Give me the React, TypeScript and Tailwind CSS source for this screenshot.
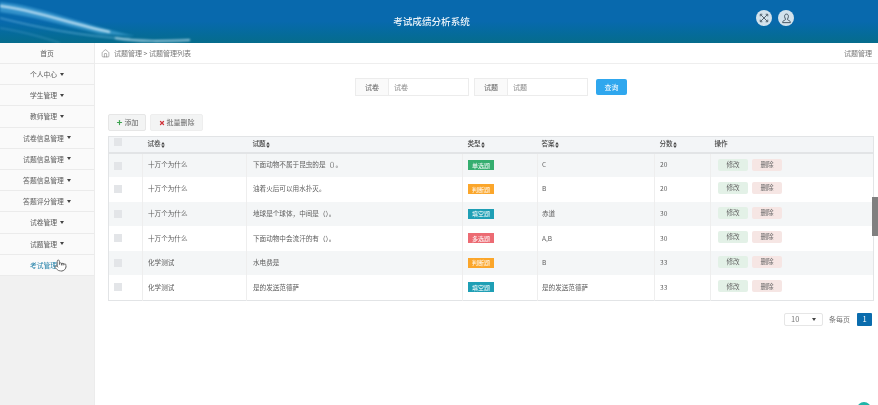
import React from 'react';
import { Home, Plus, X, Pointer } from 'lucide-react';

const menus = ['个人中心', '学生管理', '教师管理', '试卷信息管理', '试题信息管理', '答题信息管理', '答题评分管理', '试卷管理', '试题管理', '考试管理'];

const rows = [
  { paper: '十万个为什么', title: '下面动物不属于昆虫的是（）。', type: '单选题', color: 'bg-[#35ae6f]', answer: 'C', score: 20 },
  { paper: '十万个为什么', title: '油着火后可以用水扑灭。', type: '判断题', color: 'bg-[#fba62b]', answer: 'B', score: 20 },
  { paper: '十万个为什么', title: '地球是个球体，中间是（）。', type: '填空题', color: 'bg-[#1f9fb5]', answer: '赤道', score: 30 },
  { paper: '十万个为什么', title: '下面动物中会流汗的有（）。', type: '多选题', color: 'bg-[#ec6b73]', answer: 'A,B', score: 30 },
  { paper: '化学测试', title: '水电费是', type: '判断题', color: 'bg-[#fba62b]', answer: 'B', score: 33 },
  { paper: '化学测试', title: '是的发送范德萨', type: '填空题', color: 'bg-[#1f9fb5]', answer: '是的发送范德萨', score: 33 },
];

const Sort = () => (
  <svg viewBox="0 0 6 10" className="inline-block h-[6px] w-[4px] fill-[#444]">
    <path d="M3 0 6 4H0ZM3 10 0 6H6Z" />
  </svg>
);

const Caret = () => <span className="ml-[3px] inline-block border-x-[2px] border-t-[3px] border-x-transparent border-t-[#444] align-middle" />;

const Check = () => <div className="ml-[5px] mt-[8px] h-[8px] w-[8px] bg-[#e3e5e8]" />;

export default function App() {
  return (
    <div className="relative flex h-[405px] w-[878px] flex-col overflow-hidden bg-white font-['Noto_Sans_CJK_SC','Liberation_Sans',sans-serif] text-[6.6px] text-[#5c5c5c] blur-[0.3px]">
      <header className="relative flex h-[43px] shrink-0 items-center justify-center overflow-hidden bg-gradient-to-b from-[#0869ad] from-50% to-[#066c8c]">
        <svg viewBox="0 0 300 43" className="absolute left-0 top-0 h-[43px] w-[300px] blur-[0.8px]" fill="none">
          <path d="M0 2C40 6 80 24 135 36L100 34C60 24 30 16 0 12Z" fill="#58b4e4" opacity=".55" />
          <path d="M0 6C35 10 70 24 110 32" stroke="#e6f7ff" strokeWidth="2" opacity=".85" />
          <path d="M0 18C40 28 80 36 130 39" stroke="#8fd0f0" strokeWidth="1" opacity=".7" />
          <path d="M0 28C25 32 45 38 60 43" stroke="#7dbfe4" strokeWidth="1" opacity=".45" />
          <path d="M115 38C140 42 165 41 190 40" stroke="#d8f2fd" strokeWidth="2" opacity=".7" />
        </svg>
        <h1 className="relative ml-[-15px] text-[9.6px] font-medium text-[#e8f2f8]">考试成绩分析系统</h1>
        <div className="absolute left-[756px] top-[10px] flex gap-[6px]">
          <div className="flex h-[16px] w-[16px] items-center justify-center rounded-full bg-[#d3e2ec]">
            <svg viewBox="0 0 12 12" className="h-[10px] w-[10px] fill-none stroke-[#3c4c58]" strokeWidth="1">
              <path d="M2 2 10 10M10 2 2 10M1.5 4V1.5H4M8 1.5H10.5V4M1.5 8V10.5H4M8 10.5H10.5V8" />
            </svg>
          </div>
          <div className="flex h-[16px] w-[16px] items-center justify-center rounded-full bg-[#d3e2ec]">
            <svg viewBox="0 0 12 12" className="h-[11px] w-[11px] fill-none stroke-[#3c4c58]" strokeWidth="1">
              <path d="M6 1.2C4.6 1.2 3.9 2.3 3.9 3.6 3.9 5 4.6 6 4.9 6.6 5 7.4 4.6 7.7 3.5 8.1 2.4 8.5 1.8 9 1.8 10.5H10.2C10.2 9 9.6 8.5 8.5 8.1 7.4 7.7 7 7.4 7.1 6.6 7.4 6 8.1 5 8.1 3.6 8.1 2.3 7.4 1.2 6 1.2Z" />
            </svg>
          </div>
        </div>
      </header>

      <div className="flex min-h-0 flex-1">
        <aside className="w-[95px] shrink-0 border-r border-[#ececec] bg-[#f1f1f1] text-[6.8px]">
          <div className="flex h-[21px] items-center justify-center border-b border-[#ebebeb] bg-[#fafafa]">首页</div>
          {menus.map((m) => (
            <div
              key={m}
              className={`flex h-[21.2px] items-center justify-center border-b border-[#ebebeb] bg-[#fafafa] ${m === '考试管理' ? 'text-[#2a84ab]' : ''}`}
            >
              {m}
              <Caret />
            </div>
          ))}
        </aside>

        <main className="min-w-0 flex-1">
          <div className="flex h-[21px] items-center justify-between border-b border-[#eeeeee] pl-[6px] pr-[6px] text-[7px] text-[#777]">
            <div className="flex items-center">
              <Home className="mr-[4px] h-[9px] w-[9px] text-[#777]" strokeWidth={1.5} />
              试题管理 &gt; 试题管理列表
            </div>
            <span>试题管理</span>
          </div>

          <div className="ml-[260px] mt-[14px] flex h-[18px] items-center text-[7px]">
            <div className="flex h-[18px] w-[114px] border border-[#ececec]">
              <span className="flex w-[33px] items-center justify-center border-r border-[#ececec] bg-[#fafafa]">试卷</span>
              <span className="flex items-center pl-[5px] text-[#888]">试卷</span>
            </div>
            <div className="ml-[5px] flex h-[18px] w-[114px] border border-[#ececec]">
              <span className="flex w-[33px] items-center justify-center border-r border-[#ececec] bg-[#fafafa]">试题</span>
              <span className="flex items-center pl-[5px] text-[#888]">试题</span>
            </div>
            <button className="ml-[8px] h-[16px] w-[31px] rounded-[2px] bg-[#2fa7ee] text-[7px] text-white">查询</button>
          </div>

          <div className="ml-[13px] mt-[18px] flex h-[17px] gap-[4px]">
            <button className="flex w-[38px] items-center justify-center rounded-[2px] border border-[#e6e6e6] bg-[#f3f4f4] text-[7px] text-[#666]">
              <Plus className="mr-[2px] h-[7px] w-[7px] text-[#3ca34f]" strokeWidth={4} />
              添加
            </button>
            <button className="flex w-[53px] items-center justify-center rounded-[2px] border border-[#eeeeee] bg-[#f3f4f4] text-[7px] text-[#666]">
              <X className="mr-[2px] h-[6px] w-[6px] text-[#d0343c]" strokeWidth={5} />
              批量删除
            </button>
          </div>

          <table className="ml-[13px] mt-[5px] w-[766px] table-fixed border-collapse border border-[#e2e4e6]">
            <colgroup>
              <col className="w-[34px]" />
              <col className="w-[104px]" />
              <col className="w-[216px]" />
              <col className="w-[75px]" />
              <col className="w-[117px]" />
              <col className="w-[56px]" />
              <col />
            </colgroup>
            <thead>
              <tr className="h-[16px] border-b-2 border-[#e2e4e6] bg-[#f3f5f7] text-left text-[#444]">
                <th className="p-0 align-top"><div className="ml-[5px] mt-[1px] h-[8px] w-[8px] bg-[#e3e5e8]" /></th>
                <th className="p-0 pl-[5px] font-medium">试卷<Sort /></th>
                <th className="p-0 pl-[6px] font-medium">试题<Sort /></th>
                <th className="p-0 pl-[5px] font-medium">类型<Sort /></th>
                <th className="p-0 pl-[4px] font-medium">答案<Sort /></th>
                <th className="p-0 pl-[5px] font-medium">分数<Sort /></th>
                <th className="p-0 pl-[4px] font-medium">操作</th>
              </tr>
            </thead>
            <tbody>
              {rows.map((r, i) => (
                <tr key={i} className={`h-[24.6px] ${i % 2 === 0 ? 'bg-[#f4f6f7]' : 'bg-white'}`}>
                  <td className="border-r border-[#eeeeee] p-0 align-top"><Check /></td>
                  <td className="border-r border-[#eeeeee] p-0 pl-[5px]">{r.paper}</td>
                  <td className="border-r border-[#eeeeee] p-0 pl-[6px]">{r.title}</td>
                  <td className="border-r border-[#eeeeee] p-0 pl-[5px]">
                    <span className={`inline-flex h-[10px] w-[26px] items-center justify-center text-[6px] text-white ${r.color}`}>{r.type}</span>
                  </td>
                  <td className="border-r border-[#eeeeee] p-0 pl-[4px]">{r.answer}</td>
                  <td className="border-r border-[#eeeeee] p-0 pl-[5px]">{r.score}</td>
                  <td className="p-0 pl-[7px] align-top">
                    <div className="mt-[5px] flex gap-[4px]">
                      <button className="h-[12px] w-[30px] rounded-[2px] bg-[#e3f1e7] text-[6.6px] text-[#666]">修改</button>
                      <button className="h-[12px] w-[30px] rounded-[2px] bg-[#f6e6e4] text-[6.6px] text-[#666]">删除</button>
                    </div>
                  </td>
                </tr>
              ))}
            </tbody>
          </table>

          <div className="mr-[6px] mt-[12px] flex items-center justify-end">
            <div className="flex h-[13px] w-[39px] items-center justify-between rounded-[2px] border border-[#e6e6e6] px-[6px] text-[7.5px] text-[#777]">
              10
              <span className="border-x-[2px] border-t-[3px] border-x-transparent border-t-[#444]" />
            </div>
            <span className="ml-[6px] text-[7px] text-[#777]">条每页</span>
            <span className="ml-[7px] flex h-[13px] w-[15px] items-center justify-center rounded-[1px] bg-[#0a6cad] text-[7.5px] text-white">1</span>
          </div>
        </main>
      </div>

      <Pointer className="absolute left-[54px] top-[259px] h-[13px] w-[13px] fill-white text-[#555]" strokeWidth={1.5} />
      <div className="absolute left-[872px] top-[197px] h-[39px] w-[6px] bg-[#808080]" />
      <div className="absolute left-[857px] top-[402px] h-[14px] w-[14px] rounded-full bg-[#1fb5a8]" />
    </div>
  );
}
